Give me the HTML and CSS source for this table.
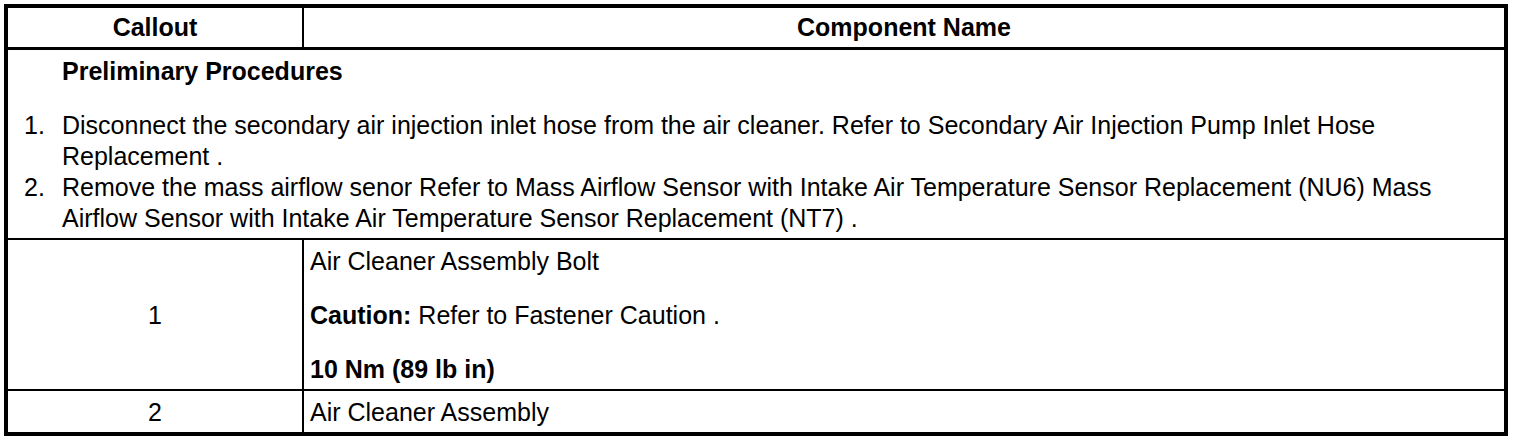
FILE: index.html
```html
<!DOCTYPE html>
<html lang="en">
<head>
<meta charset="utf-8">
<title>Air Cleaner Assembly Replacement</title>
<link rel="stylesheet" href="styles.css">
</head>
<body>
<table class="proc">
  <thead>
    <tr>
      <th class="col-callout">Callout</th>
      <th class="col-name">Component Name</th>
    </tr>
  </thead>
  <tbody>
    <tr class="prelim-row">
      <td colspan="2" class="prelim">
        <p class="prelim-title">Preliminary Procedures</p>
        <ol class="steps">
          <li>Disconnect the secondary air injection inlet hose from the air cleaner. Refer to Secondary Air Injection Pump Inlet Hose Replacement .</li>
          <li>Remove the mass airflow senor Refer to Mass Airflow Sensor with Intake Air Temperature Sensor Replacement (NU6) Mass Airflow Sensor with Intake Air Temperature Sensor Replacement (NT7) .</li>
        </ol>
      </td>
    </tr>
    <tr>
      <td class="callout">1</td>
      <td class="name">
        <p>Air Cleaner Assembly Bolt</p>
        <p><b>Caution:</b> Refer to Fastener Caution .</p>
        <p><b>10 Nm (89 lb in)</b></p>
      </td>
    </tr>
    <tr>
      <td class="callout">2</td>
      <td class="name">
        <p>Air Cleaner Assembly</p>
      </td>
    </tr>
  </tbody>
</table>
</body>
</html>
```

FILE: styles.css
```css
html, body {
  background: #fff;
}
body {
  margin: 4px;
  font-family: "Liberation Sans", Arial, Helvetica, sans-serif;
  font-size: 25px;
  line-height: 31px;
  color: #000;
}
.proc {
  width: 1504px;
  border: 4px solid #000;
  border-collapse: separate;
  border-spacing: 0;
  box-sizing: border-box;
  table-layout: fixed;
}
.proc th {
  font-weight: bold;
  text-align: center;
  padding: 4px 6px;
  height: 31px;
  border-bottom: 3px solid #000;
}
.proc th.col-callout {
  width: 282px;
  border-right: 2px solid #000;
}
.proc td {
  padding: 6px 6px 4px 6px;
  vertical-align: top;
}
.proc tbody tr + tr td {
  border-top: 2px solid #000;
}
.proc td.callout {
  text-align: center;
  vertical-align: middle;
  border-right: 2px solid #000;
}
.proc p {
  margin: 0;
}
.name p + p {
  margin-top: 23px;
}
.prelim {
  padding-top: 5px;
  padding-bottom: 3px;
  padding-right: 30px;
}
.prelim-title {
  font-weight: bold;
  padding-left: 48px;
  margin-bottom: 23px !important;
}
.steps {
  list-style: none;
  margin: 0;
  padding: 0;
  counter-reset: step;
}
.steps li {
  display: flex;
  counter-increment: step;
}
.steps li::before {
  content: counter(step) ".";
  flex: 0 0 48px;
  box-sizing: border-box;
  padding-left: 10px;
}
```
